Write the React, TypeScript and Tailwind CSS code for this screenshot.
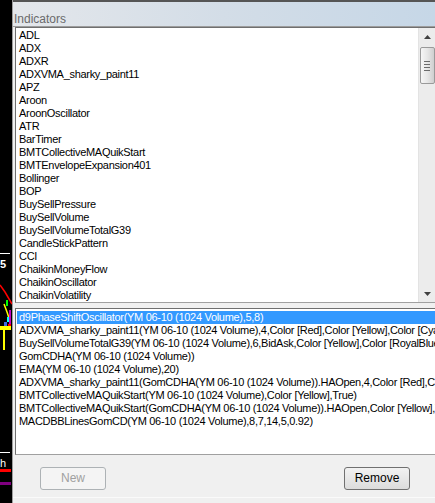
import React, { FC } from "react";

const indicators = [
  "ADL",
  "ADX",
  "ADXR",
  "ADXVMA_sharky_paint11",
  "APZ",
  "Aroon",
  "AroonOscillator",
  "ATR",
  "BarTimer",
  "BMTCollectiveMAQuikStart",
  "BMTEnvelopeExpansion401",
  "Bollinger",
  "BOP",
  "BuySellPressure",
  "BuySellVolume",
  "BuySellVolumeTotalG39",
  "CandleStickPattern",
  "CCI",
  "ChaikinMoneyFlow",
  "ChaikinOscillator",
  "ChaikinVolatility",
];

const applied = [
  "d9PhaseShiftOscillator(YM 06-10 (1024 Volume),5,8)",
  "ADXVMA_sharky_paint11(YM 06-10 (1024 Volume),4,Color [Red],Color [Yellow],Color [Cyan])",
  "BuySellVolumeTotalG39(YM 06-10 (1024 Volume),6,BidAsk,Color [Yellow],Color [RoyalBlue])",
  "GomCDHA(YM 06-10 (1024 Volume))",
  "EMA(YM 06-10 (1024 Volume),20)",
  "ADXVMA_sharky_paint11(GomCDHA(YM 06-10 (1024 Volume)).HAOpen,4,Color [Red],Color [Yellow])",
  "BMTCollectiveMAQuikStart(YM 06-10 (1024 Volume),Color [Yellow],True)",
  "BMTCollectiveMAQuikStart(GomCDHA(YM 06-10 (1024 Volume)).HAOpen,Color [Yellow],True)",
  "MACDBBLinesGomCD(YM 06-10 (1024 Volume),8,7,14,5,0.92)",
];

// slice of the price chart peeking out from behind the dialog
const ChartEdge: FC = () => (
  <svg width="12" height="503" className="block bg-black shrink-0">
    <line x1="0" y1="253.5" x2="10" y2="253.5" stroke="#fff" />
    <text x="0" y="268" fill="#fff" fontSize="11" fontWeight="bold" fontFamily="Liberation Sans, sans-serif">
      5
    </text>
    <polyline points="0,285 5,292 12,304" fill="none" stroke="#ff0000" strokeWidth="1.5" />
    <polyline points="4,304 7,312 9,318" fill="none" stroke="#ffff00" strokeWidth="1.5" />
    <rect x="6" y="300" width="2" height="6" fill="#00ff00" />
    <rect x="9" y="310" width="2" height="18" fill="#c000c0" />
    <rect x="7" y="317" width="2" height="5" fill="#00ffff" />
    <rect x="4" y="322" width="3" height="4" fill="#4169e1" />
    <rect x="8" y="324" width="3" height="4" fill="#ff0000" />
    <rect x="0" y="326" width="11" height="4" fill="#ffff00" />
    <rect x="3" y="330" width="2" height="20" fill="#ffff00" />
    <line x1="0" y1="452.5" x2="10" y2="452.5" stroke="#fff" />
    <text x="0" y="467" fill="#fff" fontSize="11" fontFamily="Liberation Sans, sans-serif">
      h
    </text>
    <rect x="0" y="469" width="11" height="3" fill="#ff0000" />
    <rect x="0" y="482" width="11" height="3" fill="#800080" />
  </svg>
);

const ScrollBar: FC = () => (
  <div className="w-[17px] shrink-0 bg-[#ececec] border-l border-[#e3e3e3] flex flex-col items-center">
    <div className="h-[17px] w-full flex items-center justify-center">
      <svg width="7" height="4">
        <polygon points="3.5,0 7,4 0,4" fill="#404040" />
      </svg>
    </div>
    <div className="mt-[2px] w-[15px] h-[37px] rounded-[2px] border border-[#9a9a9a] bg-gradient-to-r from-[#f6f6f6] via-[#e6e6e6] to-[#cfcfcf] flex flex-col items-center justify-center gap-[2px]">
      <div className="w-[6px] h-px bg-[#6b6b6b]" />
      <div className="w-[6px] h-px bg-[#6b6b6b]" />
      <div className="w-[6px] h-px bg-[#6b6b6b]" />
      <div className="w-[6px] h-px bg-[#6b6b6b]" />
    </div>
    <div className="flex-1" />
    <div className="h-[17px] w-full flex items-center justify-center">
      <svg width="7" height="4">
        <polygon points="0,0 7,0 3.5,4" fill="#404040" />
      </svg>
    </div>
  </div>
);

const App: FC = () => {
  return (
    <div
      className="w-[435px] h-[503px] overflow-hidden flex bg-black text-[11px] leading-[13px] tracking-[-0.3px] text-black"
      style={{ fontFamily: '"Liberation Sans", Arial, sans-serif' }}
    >
      <ChartEdge />

      <div className="flex-1 min-w-0 flex flex-col bg-[#f0f0f0] border-l border-[#9f9f9f]">
        <div className="h-[2px] bg-[#555555]" />
        <div className="h-[25px] pl-[1px] flex items-center border-b border-[#9c9c9c] bg-gradient-to-r from-[#e4e7eb] via-[#d3dde7] to-[#c6d7e7]">
          <span className="text-[12px] tracking-normal text-[#6a6a6a] mt-[10px]">Indicators</span>
        </div>

        <div className="pl-[2px] flex flex-col">
          {/* available indicators */}
          <div className="w-[420px] h-[276px] flex bg-white border-l border-t border-b border-[#6f6f6f] border-b-[#a0a0a0]">
            <div className="flex-1 pl-[3px] pt-[1px]">
              {indicators.map((name) => (
                <div key={name} className="h-[13px] whitespace-nowrap">
                  {name}
                </div>
              ))}
            </div>
            <ScrollBar />
          </div>

          {/* indicators applied to the chart */}
          <div className="mt-[5px] w-[420px] h-[147px] bg-white border-l border-t border-b border-[#6f6f6f] border-b-[#a0a0a0] pl-px pt-[2px] overflow-hidden">
            {applied.map((line, i) => (
              <div
                key={line}
                className={
                  i === 0
                    ? "h-[13px] pl-[2px] whitespace-nowrap bg-[#3399ff] text-white"
                    : "h-[13px] pl-[2px] whitespace-nowrap"
                }
              >
                {line}
              </div>
            ))}
          </div>
        </div>

        <div className="flex-1 flex items-start justify-between pt-[12px] pl-[27px] pr-[25px] border-b border-[#fafafa]">
          <button
            disabled
            className="w-[66px] h-[23px] rounded-[3px] border border-[#adb2b5] bg-[#f4f4f4] text-[12px] tracking-normal text-[#a0a0a0]"
          >
            New
          </button>
          <button className="w-[66px] h-[23px] rounded-[3px] border border-[#707070] bg-gradient-to-b from-[#f2f2f2] to-[#dcdcdc] text-[12px] tracking-normal text-black">
            Remove
          </button>
        </div>
        <div className="h-[5px]" />
      </div>
    </div>
  );
};

export default App;
